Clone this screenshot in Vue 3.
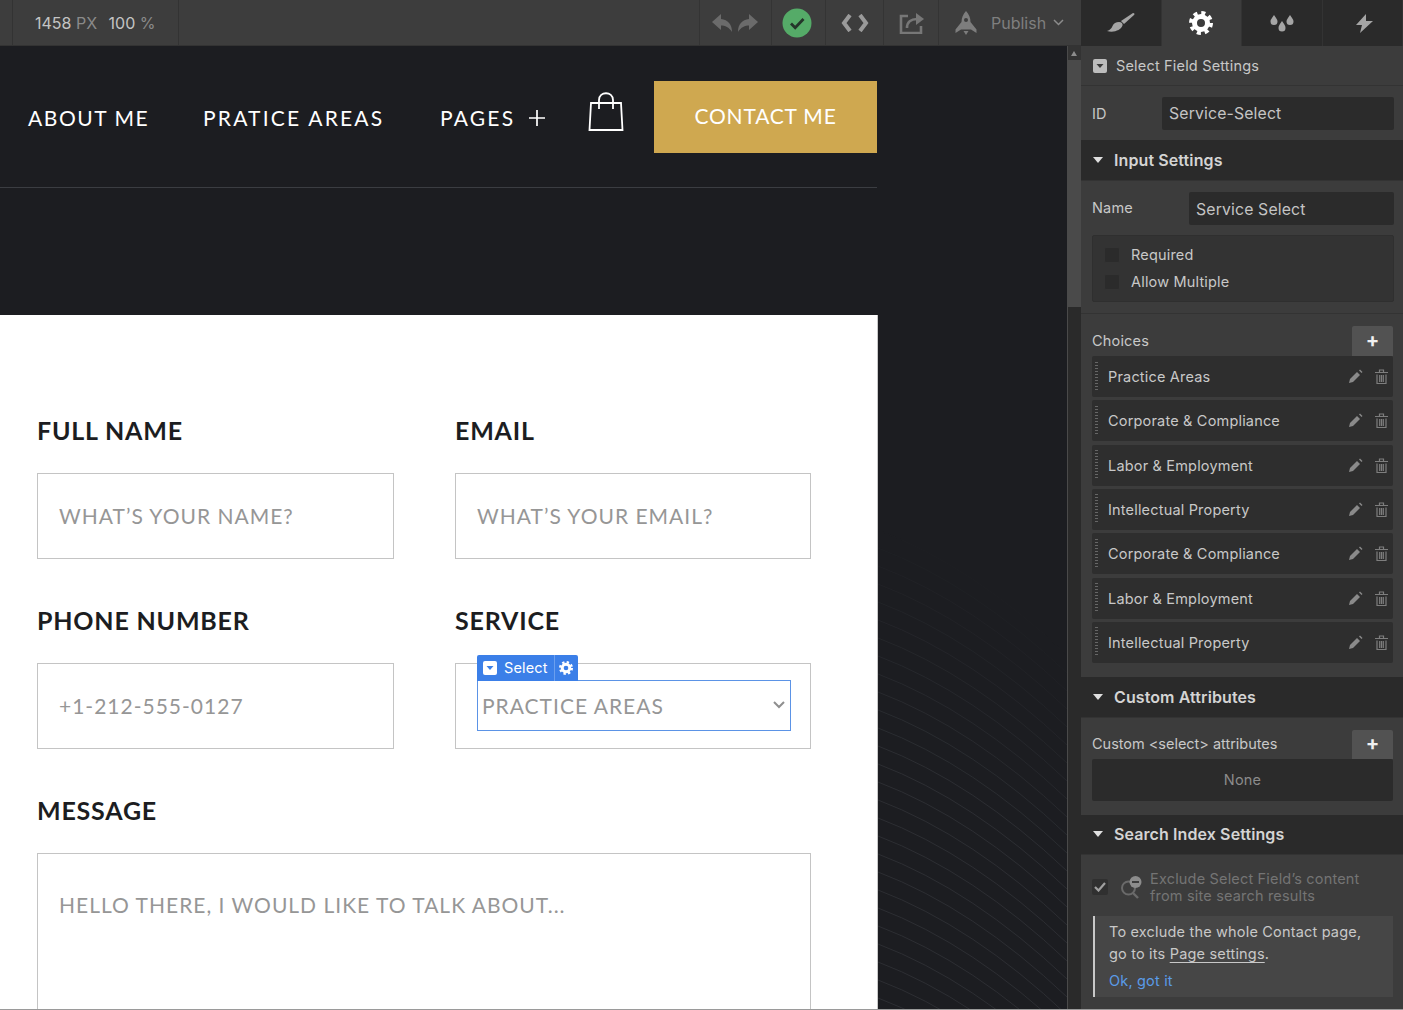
<script setup>
const choices = ['Practice Areas','Corporate & Compliance','Labor & Employment','Intellectual Property','Corporate & Compliance','Labor & Employment','Intellectual Property']
const waves = Array.from({ length: 34 }, (_, i) => {
  const y = 484 + i * 18
  return { d: `M0 ${y} Q 95 ${y + 36} 189 ${y + 125}`, o: Math.min(0.55, 0.05 + i * 0.04) }
})
</script>

<template>
  <div class="app">
    <div class="left">
      <header class="toolbar">
        <div class="size"><span>1458</span> <i>PX</i> <span class="pct">100</span> <i>%</i></div>
        <div class="tools">
          <div class="tool t-undo">
            <svg width="46" height="20" viewBox="0 0 46 20" fill="#6b6b6b"><path d="M9 1 0 9l9 8v-4.500c4 0 8 1.500 11 6.500 0-8-4-12-11-13z"/><path d="M37 1l9 8-9 8v-4.500c-4 0-8 1.500-11 6.500 0-8 4-12 11-13z"/></svg>
          </div>
          <div class="tool t-check">
            <svg width="30" height="30" viewBox="0 0 30 30"><circle cx="15" cy="15" r="14.500" fill="#55ab68"/><path d="M9 15.500l4.200 4.200L21.500 11" fill="none" stroke="#24352a" stroke-width="2.800"/></svg>
          </div>
          <div class="tool t-code">
            <svg width="28" height="18" viewBox="0 0 28 18" fill="none" stroke="#9a9a9a" stroke-width="4"><path d="M9 1 3 9l6 8"/><path d="M19 1l6 8-6 8"/></svg>
          </div>
          <div class="tool t-share">
            <svg width="26" height="22" viewBox="0 0 26 22" fill="none" stroke="#777" stroke-width="2.600"><path d="M9 4H2v17h20v-7"/><path d="M8 16c0-6 4-9 10-9"/><path d="M17 1l8 6-8 6z" fill="#777" stroke="none"/></svg>
          </div>
          <div class="tool t-publish">
            <svg width="24" height="24" viewBox="0 0 24 24" fill="#7d7d7d"><path fill-rule="evenodd" d="M12 0c3 3 4.500 7 4.500 11l6 7.500V22l-5.500-3.500H7L1.500 22v-3.500l6-7.500C7.500 7 9 3 12 0zm0 7a2 2 0 1 0 0 4 2 2 0 0 0 0-4z"/><path d="M9.500 20h5L12 24z"/></svg>
            <span>Publish</span>
            <svg width="11" height="7" viewBox="0 0 11 7" fill="none" stroke="#8c8c8c" stroke-width="1.500"><path d="M1 1l4.500 4.500L10 1"/></svg>
          </div>
        </div>
      </header>

      <div class="canvas">
        <main class="page">
          <nav class="nav">
            <a class="n1">ABOUT ME</a>
            <a class="n2">PRATICE AREAS</a>
            <a class="pages">PAGES
              <svg width="16" height="16" viewBox="0 0 16 16" stroke="#fff" stroke-width="1.700"><path d="M8 0v16M0 8h16"/></svg>
            </a>
            <svg class="bag" width="36" height="40" viewBox="0 0 36 40" fill="none" stroke="#fff" stroke-width="1.800"><path d="M3 11h30l1.500 27H1.500z"/><path d="M11 17V8c0-9 14-9 14 0v9"/></svg>
            <button class="cta">CONTACT ME</button>
          </nav>
          <div class="hero"></div>
          <section class="form">
            <div class="field">
              <label>FULL NAME</label>
              <div class="box">WHAT’S YOUR NAME?</div>
            </div>
            <div class="field">
              <label>EMAIL</label>
              <div class="box">WHAT’S YOUR EMAIL?</div>
            </div>
            <div class="field">
              <label>PHONE NUMBER</label>
              <div class="box">+1-212-555-0127</div>
            </div>
            <div class="field">
              <label>SERVICE</label>
              <div class="box sel-box">
                <div class="select">
                  <div class="tag">
                    <span class="tag-main">
                      <svg width="14" height="14" viewBox="0 0 14 14"><rect width="14" height="14" rx="2" fill="#fff"/><path d="M3.500 5 7 9l3.500-4z" fill="#3b7fe8"/></svg>
                      Select
                    </span>
                    <span class="tag-gear">
                      <svg width="14" height="14" viewBox="0 0 24 24"><circle cx="12" cy="12" r="6.500" fill="none" stroke="#fff" stroke-width="5"/><circle cx="12" cy="12" r="10" fill="none" stroke="#fff" stroke-width="4" stroke-dasharray="4 3.850"/></svg>
                    </span>
                  </div>
                  <span>PRACTICE AREAS</span>
                  <svg width="12" height="8" viewBox="0 0 12 8" fill="none" stroke="#8f8f8f" stroke-width="2"><path d="M1 1l5 5 5-5"/></svg>
                </div>
              </div>
            </div>
            <div class="field wide">
              <label>MESSAGE</label>
              <div class="box area">HELLO THERE, I WOULD LIKE TO TALK ABOUT...</div>
            </div>
          </section>
        </main>
        <div class="backdrop">
          <svg class="waves" width="189" height="964" viewBox="0 0 189 964">
            <path v-for="(w, i) in waves" :key="i" :d="w.d" fill="none" stroke="#3a3d42" :stroke-opacity="w.o"/>
          </svg>
        </div>
        <div class="scroll">
          <div class="up"></div>
          <div class="thumb"></div>
        </div>
      </div>
    </div>

    <aside class="panel">
      <div class="tabs">
        <div class="tab">
          <svg width="28" height="21" viewBox="0 0 28 21" fill="#a5a5a5"><path d="M26 0c1.500 0 2 1 1 2L17 11l-3-3z"/><path d="M12 9c2.500 0 4 1.500 3.500 3.500C14 17 7 20 0 18c3-1 4.500-2.500 5.500-5 1-2.500 3.500-4 6.500-4z"/></svg>
        </div>
        <div class="tab active">
          <svg width="24" height="24" viewBox="0 0 24 24"><circle cx="12" cy="12" r="6.500" fill="none" stroke="#fff" stroke-width="5"/><circle cx="12" cy="12" r="10" fill="none" stroke="#fff" stroke-width="4" stroke-dasharray="4 3.850"/></svg>
        </div>
        <div class="tab">
          <svg width="24" height="19" viewBox="0 0 24 19" fill="#a5a5a5"><path d="M4 1c2 3 3.500 4.500 3.500 6.500a3.500 3.500 0 0 1-7 0C.5 5.500 2 4 4 1z"/><path d="M20 1c2 3 3.500 4.500 3.500 6.500a3.500 3.500 0 0 1-7 0c0-2 1.500-3.500 3.500-6.500z"/><path d="M12 7c2 3 3.500 4.500 3.500 7a3.500 3.500 0 0 1-7 0c0-2.500 1.500-4 3.500-7z"/></svg>
        </div>
        <div class="tab t-bolt">
          <svg width="17" height="19" viewBox="0 0 17 19" fill="#a5a5a5"><path d="M10 0 0 11h6l-2 8 13-12h-7z"/></svg>
        </div>
      </div>

      <div class="title-row">
        <svg width="14" height="14" viewBox="0 0 14 14"><rect width="14" height="14" rx="2" fill="#bdbdbd"/><path d="M3.500 5 7 9l3.500-4z" fill="#3a3a3a"/></svg>
        <span>Select Field Settings</span>
      </div>
      <div class="id-row">
        <span>ID</span>
        <div class="input id-input">Service-Select</div>
      </div>

      <h3 class="head"><i class="tri"></i>Input Settings</h3>
      <div class="name-row">
        <span class="name-label">Name</span>
        <div class="input name-input">Service Select</div>
      </div>
      <div class="checks">
        <div class="check"><i></i>Required</div>
        <div class="check"><i></i>Allow Multiple</div>
      </div>
      <div class="choices">
        <div class="list-head"><span>Choices</span><button class="plus">+</button></div>
        <div class="choice" v-for="(c, i) in choices" :key="i">
          <i class="grip"></i>
          <span class="c-name">{{ c }}</span>
          <svg width="15" height="15" viewBox="0 0 15 15" fill="#8a8a8a"><path d="M1 14l1-4 7-7 3 3-7 7z"/><path d="M11 1.500l1-1 2.500 2.500-1 1z"/></svg>
          <svg class="trash" width="13" height="15" viewBox="0 0 13 15" fill="none" stroke="#7e7e7e" stroke-width="1.200"><path d="M0 3.500h13M4.500 3V1h4v2M2 5.500V14.500h9V5.500M4.700 6v7M6.500 6v7M8.300 6v7"/></svg>
        </div>
      </div>

      <h3 class="head"><i class="tri"></i>Custom Attributes</h3>
      <div class="attrs">
        <div class="list-head short"><span class="attr-label">Custom &lt;select&gt; attributes</span><button class="plus">+</button></div>
        <div class="none">None</div>
      </div>

      <h3 class="head h-search"><i class="tri"></i>Search Index Settings</h3>
      <div class="search">
        <div class="exclude">
          <span class="ex-check">
            <svg width="12" height="10" viewBox="0 0 12 10" fill="none" stroke="#a0a0a0" stroke-width="2.200"><path d="M1 5l3.500 3.500L11 1"/></svg>
          </span>
          <svg class="ex-icon" width="24" height="24" viewBox="0 0 24 24"><circle cx="9.500" cy="13" r="6.500" fill="none" stroke="#6a6a6a" stroke-width="2"/><path d="M14 18l5 5" stroke="#6a6a6a" stroke-width="2.400"/><circle cx="16.500" cy="7" r="6" fill="#8c8c8c"/><path d="M13 7h7" stroke="#3c3c3c" stroke-width="2"/></svg>
          <p>Exclude Select Field’s content<br>from site search results</p>
        </div>
        <div class="note">
          <p>To exclude the whole Contact page,<br>go to its <u>Page settings</u>.</p>
          <a>Ok, got it</a>
        </div>
      </div>
    </aside>
  </div>
</template>

<style>
html, body { margin: 0; background: #9a9a9a; }
</style>

<style scoped>
.app { width: 1403px; height: 1009px; display: flex; overflow: hidden; font-family: Inter, "Liberation Sans", sans-serif; }
.left { width: 1081px; display: flex; flex-direction: column; }
.toolbar { height: 46px; flex: none; background: #3d3d3d; display: flex; justify-content: space-between; box-sizing: border-box; border-bottom: 1px solid #333; }
.size { margin-left: 12px; width: 167px; box-sizing: border-box; padding-left: 22px; border-left: 1px solid #333; border-right: 1px solid #333; color: #c4c4c4; font-size: 16px; line-height: 46px; }
.size i { font-style: normal; color: #8a8a8a; }
.size .pct { margin-left: 7px; }
.tools { display: flex; height: 45px; }
.tool { display: flex; align-items: center; justify-content: center; border-left: 1px solid #343434; box-sizing: border-box; }
.t-undo { width: 72px; padding-right: 2px; }
.t-check { width: 54px; padding-right: 4px; }
.t-code { width: 58px; }
.t-share { width: 55px; padding-left: 2px; }
.t-publish { width: 143px; justify-content: flex-start; padding-left: 15px; gap: 13px; color: #7f7f7f; font-size: 16px; }
.t-publish svg:last-child { margin-left: -6px; }
.canvas { flex: 1; display: flex; min-height: 0; background: #1c1d21; }
.page { width: 878px; flex: none; display: flex; flex-direction: column; overflow: hidden; }
.nav { height: 142px; width: 877px; flex: none; box-sizing: border-box; padding-left: 28px; display: flex; align-items: center; border-bottom: 1px solid #3b3d42; font-family: Lato, sans-serif; color: #fff; font-size: 21px; letter-spacing: 2.200px; }
.nav a { white-space: nowrap; padding-top: 2px; }
.n1 { width: 175px; letter-spacing: 1.550px; }
.n2 { width: 237px; }
.nav .pages { display: flex; align-items: center; gap: 14px; width: 148px; }
.bag { margin-right: 30px; margin-top: -9px; flex: none; }
.cta { width: 223px; height: 72px; flex: none; border: 0; background: #cfa850; color: #fff; font: inherit; letter-spacing: 0.800px; padding: 0 0 3px; }
.hero { height: 127px; flex: none; }
.form { flex: 1; background: #fff; box-sizing: border-box; padding: 98px 0 0 37px; display: grid; grid-template-columns: 357px 356px; column-gap: 61px; row-gap: 44px; align-content: start; font-family: Lato, sans-serif; border-right: 1px solid #c9c9c9; }
.field.wide { grid-column: 1 / -1; }
.field label { display: block; height: 37px; line-height: 35px; margin-bottom: 23px; font-size: 25px; font-weight: 700; color: #1c1d21; letter-spacing: 0.800px; }
.box { height: 86px; box-sizing: border-box; border: 1px solid #c4c4c4; padding: 0 0 2px 21px; display: flex; align-items: center; color: #969696; font-size: 21px; letter-spacing: 1px; }
.area { height: 200px; align-items: flex-start; padding-top: 38px; }
.select { position: relative; width: 314px; height: 51px; box-sizing: border-box; border: 1.500px solid #5b93e6; padding: 0 5px 0 4px; display: flex; align-items: center; justify-content: space-between; }
.tag { position: absolute; left: -1px; top: -26px; height: 26px; display: flex; background: #3b7fe8; color: #fff; font-family: Inter, sans-serif; font-size: 14.500px; letter-spacing: 0.150px; border-radius: 2px 2px 0 0; }
.tag-main { display: flex; align-items: center; gap: 7px; padding: 0 6px; border-right: 1px solid #6b9fee; }
.tag-gear { display: flex; align-items: center; padding: 0 5px 0 4px; }
.backdrop { flex: 1; position: relative; overflow: hidden; }
.waves { position: absolute; left: 0; top: 0; }
.scroll { width: 14px; flex: none; background: #2a2a2a; border-left: 1px solid #4a4a4a; box-sizing: border-box; display: flex; flex-direction: column; }
.up { height: 14px; flex: none; position: relative; background: #333; }
.up::after { content: ""; position: absolute; left: 3px; top: 5px; border: 3.500px solid transparent; border-top: 0; border-bottom: 5px solid #8c8c8c; }
.thumb { height: 247px; background: #4a4a4a; }

.panel { width: 322px; flex: none; background: #3c3c3c; color: #c8c8c8; font-size: 14.500px; letter-spacing: 0.180px; display: flex; flex-direction: column; }
.tabs { height: 46px; flex: none; display: grid; grid-template-columns: repeat(4, 1fr); background: #2a2a2a; }
.tab { display: flex; align-items: center; justify-content: center; border-right: 1px solid #333; }
.tab.active { background: #3c3c3c; }
.t-bolt { padding-left: 4px; }
.title-row { height: 39px; flex: none; padding-left: 12px; display: flex; align-items: center; gap: 9px; border-bottom: 1px solid #333; }
.id-row, .name-row { display: flex; align-items: center; }
.id-row { height: 54px; padding: 0 9px 0 11px; justify-content: space-between; }
.input { height: 33px; box-sizing: border-box; background: #2b2b2b; border-radius: 2px; padding-left: 7px; display: flex; align-items: center; font-size: 15.800px; letter-spacing: 0.150px; color: #c4c4c4; }
.id-input { width: 232px; }
.name-row { padding: 11px 9px 0 11px; justify-content: space-between; }
.name-label { margin-top: -3px; }
.name-input { width: 205px; padding-top: 1px; }
.head { margin: 0; height: 41px; flex: none; box-sizing: border-box; padding-left: 12px; background: #2a2a2a; display: flex; align-items: center; gap: 11px; font-size: 16px; font-weight: 600; color: #d4d4d4; border-bottom: 1px solid #333; letter-spacing: 0.100px; }
.h-search { height: 40px; }
.tri { width: 0; height: 0; border: 5px solid transparent; border-bottom: 0; border-top: 6px solid #e0e0e0; }
.checks { margin: 10px 9px 0 11px; height: 67px; box-sizing: border-box; background: #333; border: 1px solid #2f2f2f; border-radius: 2px; padding: 5px 0 0 11px; }
.check { display: flex; align-items: center; height: 27px; gap: 11px; }
.check i { width: 16px; height: 16px; background: #2b2b2b; border: 1px solid #333; box-sizing: border-box; border-radius: 2px; }
.choices { margin-top: 11px; border-top: 1px solid #333; padding: 12px 10px 14px 11px; }
.list-head { display: flex; justify-content: space-between; align-items: center; height: 30px; }
.list-head.short { height: 29px; }
.list-head > span { margin-top: -1px; }
.attr-label { letter-spacing: -0.020px; }
.plus { width: 41px; height: 100%; border: 0; padding: 0 0 2px; background: #525252; color: #f0f0f0; font: 700 20px/27px Inter, sans-serif; border-radius: 2px 2px 0 0; }
.choice { height: 41px; background: #2e2e2e; border-radius: 2px; display: flex; align-items: center; margin-bottom: 3.330px; padding-right: 5px; }
.choice:last-child { margin-bottom: 0; }
.grip { width: 3px; height: 30px; margin-left: 3px; background: repeating-linear-gradient(#666 0 1px, transparent 1px 3px); }
.c-name { flex: 1; padding-left: 10px; }
.trash { margin-left: 12px; }
.attrs { padding: 12px 10px 14px 11px; }
.none { height: 42px; background: #2b2b2b; border-radius: 2px; display: flex; align-items: center; justify-content: center; color: #8c8c8c; }
.search { padding: 15px 10px 0 11px; }
.exclude { display: flex; align-items: center; color: #747474; line-height: 17px; height: 34px; margin-bottom: 12px; }
.exclude p { margin: 0 0 0 7px; }
.ex-check { width: 16px; height: 16px; background: #303030; border-radius: 2px; display: flex; align-items: center; justify-content: center; margin-right: 11px; }
.note { margin-left: 1px; height: 81px; box-sizing: border-box; background: #464646; border-left: 2px solid #c8c8c8; padding: 5px 0 0 14px; line-height: 22px; }
.note p { margin: 0; }
.note a { display: block; margin-top: 5px; color: #5a9be8; }
.note u { text-underline-offset: 3px; }
</style>
